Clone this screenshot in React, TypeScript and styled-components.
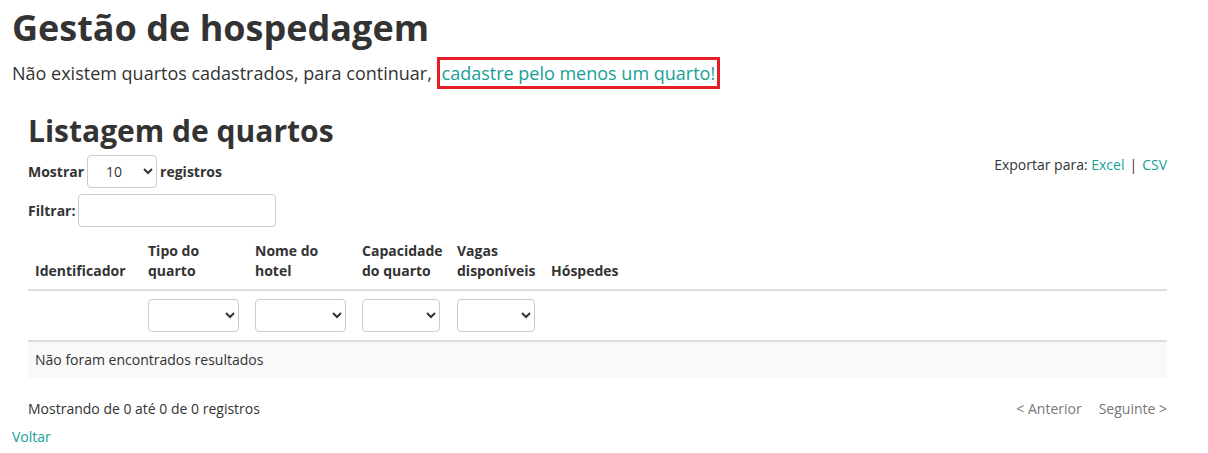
import React from "react";
import styled, { createGlobalStyle } from "styled-components";

const Global = createGlobalStyle`
  html, body { margin: 0; padding: 0; background: #fff; }
  body { font-family: "Open Sans", "Liberation Sans", sans-serif; color: #333; font-size: 14px; }
  * { box-sizing: border-box; }
`;

const Page = styled.div`
  padding: 8px 12px 0 12px;
`;

const Title = styled.h1`
  margin: 0;
  font-size: 36px;
  font-weight: 700;
  line-height: 40px;
  color: #333;
`;

const Lead = styled.p`
  margin: 9px 0 0 0;
  font-size: 18px;
  line-height: 26px;
  color: #333;
`;

const Link = styled.a`
  color: #17a097;
  text-decoration: none;
  cursor: pointer;
`;

const Highlight = styled(Link)`
  display: inline-block;
  border: 3px solid #e31e24;
  padding: 0 2px;
  line-height: 26px;
`;

const Section = styled.section`
  padding: 0 29px 0 16px;
  margin-top: 24px;
`;

const SubTitle = styled.h2`
  margin: 0;
  font-size: 30px;
  font-weight: 700;
  line-height: 36px;
  color: #333;
`;

const ToolRow = styled.div`
  display: flex;
  justify-content: space-between;
  align-items: flex-start;
  margin-top: 6px;
`;

const Controls = styled.div`
  display: flex;
  flex-direction: column;
  gap: 6px;
`;

const ControlLine = styled.label`
  display: flex;
  align-items: center;
  gap: 3px;
  font-weight: 700;
  font-size: 14px;
`;

const Select = styled.select<{ $w: number }>`
  width: ${(p) => p.$w}px;
  height: 33px;
  border: 1px solid #ccc;
  border-radius: 4px;
  background: #fff;
  font-family: inherit;
  font-size: 14px;
  color: #333;
  padding: 0 6px 0 14px;
`;

const TextInput = styled.input`
  width: 198px;
  height: 33px;
  border: 1px solid #ccc;
  border-radius: 4px;
  font-family: inherit;
  font-size: 14px;
  padding: 0 8px;
`;

const Export = styled.div`
  font-size: 14px;
  margin-top: 0;
  color: #333;
`;

const Sep = styled.span`
  margin: 0 5px;
`;

const Table = styled.table`
  width: 100%;
  border-collapse: collapse;
  margin-top: 6px;
  table-layout: fixed;
`;

const Th = styled.th`
  text-align: left;
  vertical-align: bottom;
  font-weight: 700;
  font-size: 14px;
  line-height: 20px;
  padding: 8px 7px;
  border-bottom: 2px solid #ddd;
`;

const Td = styled.td`
  padding: 8px 7px;
  font-size: 14px;
  line-height: 20px;
  border-bottom: 2px solid #ddd;
`;

const EmptyCell = styled.td`
  padding: 8px 7px;
  font-size: 14px;
  line-height: 20px;
  background: #f9f9f9;
`;

const Footer = styled.div`
  display: flex;
  justify-content: space-between;
  align-items: center;
  margin-top: 21px;
  font-size: 14px;
`;

const Pager = styled.div`
  display: flex;
  gap: 17px;
  color: #777;
`;

const Back = styled(Link)`
  display: block;
  margin-top: 9px;
  font-size: 14px;
`;

const cols = [113, 107, 107, 95, 94];

export default function App() {
  return (
    <Page>
      <Global />
      <Title>Gestão de hospedagem</Title>
      <Lead>
        Não existem quartos cadastrados, para continuar,{" "}
        <Highlight>cadastre pelo menos um quarto!</Highlight>
      </Lead>
      <Section>
        <SubTitle>Listagem de quartos</SubTitle>
        <ToolRow>
          <Controls>
            <ControlLine>
              Mostrar
              <Select $w={70} defaultValue="10">
                <option>10</option>
                <option>25</option>
                <option>50</option>
              </Select>
              registros
            </ControlLine>
            <ControlLine>
              Filtrar:
              <TextInput />
            </ControlLine>
          </Controls>
          <Export>
            Exportar para: <Link>Excel</Link>
            <Sep>|</Sep>
            <Link>CSV</Link>
          </Export>
        </ToolRow>
        <Table>
          <colgroup>
            {cols.map((w, i) => (
              <col key={i} style={{ width: w }} />
            ))}
            <col />
          </colgroup>
          <thead>
            <tr>
              <Th>Identificador</Th>
              <Th>Tipo do<br />quarto</Th>
              <Th>Nome do<br />hotel</Th>
              <Th>Capacidade<br />do quarto</Th>
              <Th>Vagas<br />disponíveis</Th>
              <Th>Hóspedes</Th>
            </tr>
          </thead>
          <tbody>
            <tr>
              <Td />
              <Td><Select $w={91} /></Td>
              <Td><Select $w={91} /></Td>
              <Td><Select $w={78} /></Td>
              <Td><Select $w={78} /></Td>
              <Td />
            </tr>
            <tr>
              <EmptyCell colSpan={6}>Não foram encontrados resultados</EmptyCell>
            </tr>
          </tbody>
        </Table>
        <Footer>
          <span>Mostrando de 0 até 0 de 0 registros</span>
          <Pager>
            <span>&lt; Anterior</span>
            <span>Seguinte &gt;</span>
          </Pager>
        </Footer>
      </Section>
      <Back>Voltar</Back>
    </Page>
  );
}
